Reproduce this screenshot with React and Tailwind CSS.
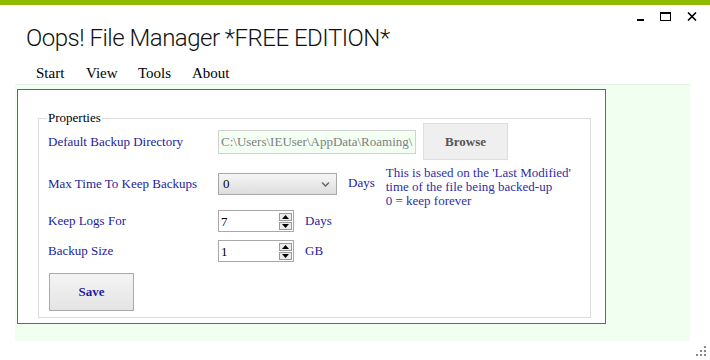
import { FaChevronDown } from "react-icons/fa";

const serif = { fontFamily: '"Liberation Serif", "DejaVu Serif", serif' };

const Spinner = () => (
  <div className="flex flex-col gap-[1px] mr-[1px]">
    <div className="w-[13px] h-[8px] bg-[#ececec] border border-[#9a9a9a] flex items-center justify-center">
      <svg width="7" height="4" viewBox="0 0 7 4"><path d="M3.5 0L7 4H0z" fill="#000" /></svg>
    </div>
    <div className="w-[13px] h-[8px] bg-[#ececec] border border-[#9a9a9a] flex items-center justify-center">
      <svg width="7" height="4" viewBox="0 0 7 4"><path d="M0 0h7L3.5 4z" fill="#000" /></svg>
    </div>
  </div>
);

const NumberBox = ({ value }) => (
  <div className="w-[76px] h-[22px] border border-[#a8a8a8] bg-white flex items-center justify-between pl-[2px]">
    <span className="text-[13px] text-black leading-none">{value}</span>
    <Spinner />
  </div>
);

export default function App() {
  return (
    <div className="w-[710px] h-[360px] bg-white overflow-hidden flex flex-col" style={serif}>
      {/* top accent */}
      <div className="h-[5px] bg-[#8fbc00]" />

      {/* window controls */}
      <div className="flex justify-end items-center gap-[16px] pr-[13px] pt-[6px] h-[17px]">
        <div className="w-[7px] h-[2px] bg-black mt-[7px]" />
        <div className="w-[11px] h-[9px] border border-black border-t-2" />
        <svg width="10" height="9" viewBox="0 0 10 9">
          <path d="M1 0.5L9 8.5M9 0.5L1 8.5" stroke="#000" strokeWidth="1.6" />
        </svg>
      </div>

      {/* title */}
      <h1
        className="pl-[26px] text-[24px] leading-[32px] font-light tracking-[-0.5px] text-[#111]"
        style={{ fontFamily: 'Roboto, "Open Sans", sans-serif' }}
      >
        Oops! File Manager *FREE EDITION*
      </h1>

      {/* menu */}
      <nav className="flex pl-[36px] mt-[8px] h-[22px] items-center text-[15px] text-black">
        <span className="w-[50px]">Start</span>
        <span className="w-[52px]">View</span>
        <span className="w-[54px]">Tools</span>
        <span>About</span>
      </nav>

      {/* green area */}
      <div className="ml-[15px] w-[675px] h-[257px] bg-[#f0fff0] border-t border-[#e6f2e6] pl-[2px] pt-[4px]">
        <div className="w-[589px] h-[235px] bg-white border border-[#666] pl-[20px] pt-[28px]">
          <div className="relative w-[553px] h-[200px] border border-[#dcdcdc] pl-[9px] pt-[4px]">
            <span className="absolute left-[8px] top-[-9px] bg-white px-[1px] text-[13px] leading-[16px] text-black">
              Properties
            </span>

            {/* row 1 */}
            <div className="flex items-center text-[13px] text-[#1c1c9c]">
              <span className="w-[170px]">Default Backup Directory</span>
              <div className="w-[198px] h-[24px] bg-[#f2fff2] border border-[#d2d2d2] pl-[2px] flex items-center overflow-hidden whitespace-nowrap text-[#808080]">
                C:\Users\IEUser\AppData\Roaming\
              </div>
              <button className="ml-[7px] w-[85px] h-[37px] bg-[#efefef] border border-[#dedede] font-bold text-[#555] text-[13px]">
                Browse
              </button>
            </div>

            {/* row 2 */}
            <div className="flex items-start mt-[6px] text-[13px] text-[#1c1c9c]">
              <span className="w-[170px] mt-[10px] leading-[16px]">Max Time To Keep Backups</span>
              <div className="mt-[7px] w-[119px] h-[22px] border border-[#a8a8a8] bg-gradient-to-b from-[#f6f6f6] to-[#dddddd] flex items-center justify-between pl-[4px] pr-[6px]">
                <span className="text-black">0</span>
                <FaChevronDown className="text-[#666] w-[9px] h-[9px]" />
              </div>
              <span className="ml-[11px] mt-[9px] leading-[16px]">Days</span>
              <div className="ml-[11px] leading-[14px] text-[#2e2ea8]">
                <div>This is based on the 'Last Modified'</div>
                <div>time of the file being backed-up</div>
                <div>0 = keep forever</div>
              </div>
            </div>

            {/* row 3 */}
            <div className="flex items-center mt-[2px] text-[13px] text-[#1c1c9c]">
              <span className="w-[170px]">Keep Logs For</span>
              <NumberBox value="7" />
              <span className="ml-[11px]">Days</span>
            </div>

            {/* row 4 */}
            <div className="flex items-center mt-[8px] text-[13px] text-[#1c1c9c]">
              <span className="w-[170px]">Backup Size</span>
              <NumberBox value="1" />
              <span className="ml-[11px]">GB</span>
            </div>

            <button className="mt-[11px] ml-[1px] w-[85px] h-[38px] border border-[#aaa] bg-gradient-to-b from-[#f4f4f4] to-[#e4e4e4] font-bold text-[13px] text-[#1c1c9c]">
              Save
            </button>
          </div>
        </div>
      </div>

      {/* resize grip */}
      <div className="flex justify-end pr-[4px] mt-[5px]">
        <svg width="10" height="10" viewBox="0 0 10 10">
          <rect x="8" y="0" width="2" height="2" fill="#888" />
          <rect x="4" y="4" width="2" height="2" fill="#888" />
          <rect x="8" y="4" width="2" height="2" fill="#888" />
          <rect x="0" y="8" width="2" height="2" fill="#888" />
          <rect x="4" y="8" width="2" height="2" fill="#888" />
          <rect x="8" y="8" width="2" height="2" fill="#888" />
        </svg>
      </div>
    </div>
  );
}
